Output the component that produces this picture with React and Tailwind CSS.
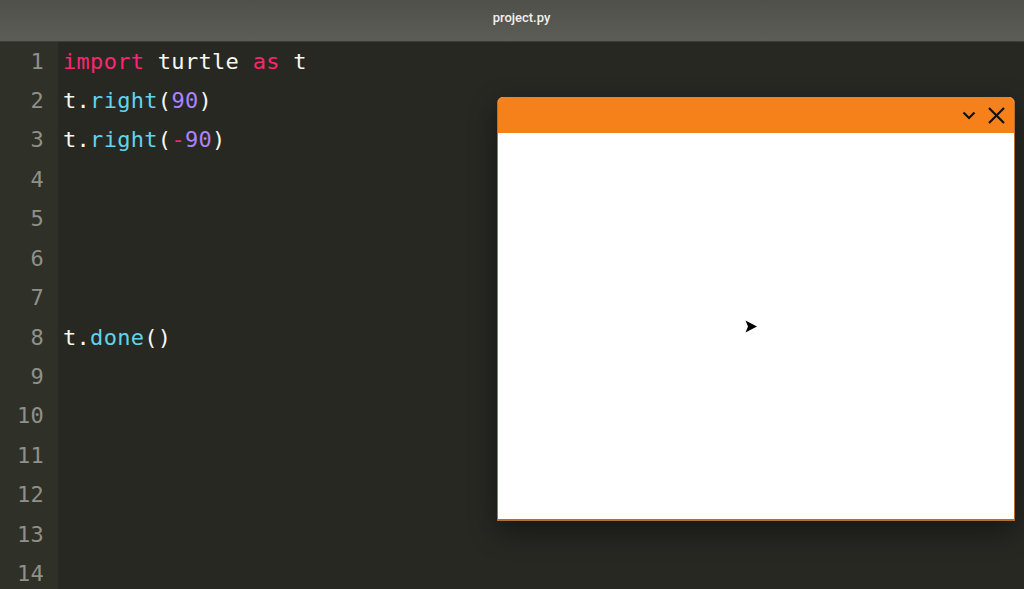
import React from "react";

const mono = "font-['DejaVu_Sans_Mono','Liberation_Mono',monospace]";

const lines = [
  [["import", "text-[#f92672]"], [" turtle ", "text-[#f8f8f2]"], ["as", "text-[#f92672]"], [" t", "text-[#f8f8f2]"]],
  [["t.", "text-[#f8f8f2]"], ["right", "text-[#5fd4ea]"], ["(", "text-[#f8f8f2]"], ["90", "text-[#ae81ff]"], [")", "text-[#f8f8f2]"]],
  [["t.", "text-[#f8f8f2]"], ["right", "text-[#5fd4ea]"], ["(", "text-[#f8f8f2]"], ["-", "text-[#f92672]"], ["90", "text-[#ae81ff]"], [")", "text-[#f8f8f2]"]],
  [],
  [],
  [],
  [],
  [["t.", "text-[#f8f8f2]"], ["done", "text-[#5fd4ea]"], ["()", "text-[#f8f8f2]"]],
  [],
  [],
  [],
  [],
  [],
  [],
];

export default function App() {
  return (
    <div className="relative w-[1024px] h-[589px] overflow-hidden bg-[#272822]">
      <header className="h-[42px] flex items-center justify-center pl-[19px] border-b border-[#3c3d38] bg-gradient-to-b from-[#4f504a] to-[#5c5d57]">
        <span className="text-[13px] font-medium text-[#f0f0ee] font-['Roboto',sans-serif] -mt-[6px]">project.py</span>
      </header>
      <main className={`flex ${mono} text-[22px] leading-[39.45px] -mt-[0.5px]`}>
        <div className="w-[58px] shrink-0 bg-[#2f3129] pr-[14px] text-right text-[#8f908a] tracking-[0.2px]">
          {lines.map((_, i) => (
            <div key={i} className="h-[39.45px]">{i + 1}</div>
          ))}
        </div>
        <div className="flex-1 pl-[5px] tracking-[0.3px]">
          {lines.map((segments, i) => (
            <div key={i} className="h-[39.45px] whitespace-pre">
              {segments.map(([text, color], j) => (
                <span key={j} className={color}>{text}</span>
              ))}
            </div>
          ))}
        </div>
      </main>
      <section className="absolute left-[497px] top-[97px] w-[518px] h-[424px] flex flex-col rounded-t-[6px] overflow-hidden border-b-2 border-x border-[#b5712c] bg-white shadow-[0_10px_28px_rgba(0,0,0,0.45)]">
        <div className="h-[36px] shrink-0 flex items-center justify-end gap-[12px] pr-[9px] bg-[#f6801a]">
          <svg width="14" height="9" viewBox="0 0 14 9" fill="none" stroke="#111" strokeWidth="2.2">
            <path d="M1.5 1.5 L7 7 L12.5 1.5" />
          </svg>
          <svg width="17" height="17" viewBox="0 0 17 17" fill="none" stroke="#111" strokeWidth="2.2">
            <path d="M1 1 L16 16 M16 1 L1 16" />
          </svg>
        </div>
        <div className="flex-1 flex items-center justify-center bg-white">
          <svg width="12" height="13" viewBox="0 0 12 13" className="mr-[10px]">
            <path d="M0.5 0.5 L12 6.5 L0.5 12.5 L3 6.5 Z" fill="#000" />
          </svg>
        </div>
      </section>
    </div>
  );
}
